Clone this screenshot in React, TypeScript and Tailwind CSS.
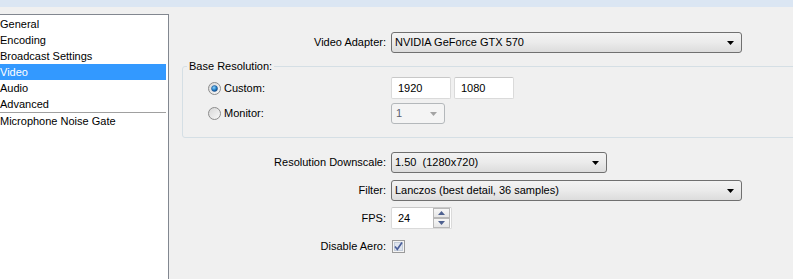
import React from 'react';

const LIST_ITEMS = ['General', 'Encoding', 'Broadcast Settings', 'Video', 'Audio', 'Advanced'];

const Arrow = ({ color = '#000' }: { color?: string }) => (
  <svg width="7" height="4" viewBox="0 0 7 4">
    <polygon points="0,0 7,0 3.5,4" fill={color} />
  </svg>
);

const ComboBox = ({ text, className = '' }: { text: string; className?: string }) => (
  <div
    className={`flex items-center h-[21px] pl-[3px] pr-[7px] border border-[#707070] rounded-[3px] bg-gradient-to-b from-[#f3f3f3] via-[#ebebeb] to-[#dcdcdc] ${className}`}
  >
    <span className="flex-1 whitespace-pre">{text}</span>
    <Arrow />
  </div>
);

const TextBox = ({ value, className = '' }: { value: string; className?: string }) => (
  <div
    className={`flex items-center h-[22px] pl-[6px] bg-white border border-[#dadada] border-t-[#c8c8c8] rounded-[2px] ${className}`}
  >
    {value}
  </div>
);

const Radio = ({ checked }: { checked?: boolean }) => (
  <svg width="13" height="13" viewBox="0 0 13 13">
    <defs>
      <linearGradient id="rbg" x1="0" y1="0" x2="1" y2="1">
        <stop offset="0" stopColor="#d6d6d6" />
        <stop offset="1" stopColor="#fafafa" />
      </linearGradient>
      <radialGradient id="rdot" cx="0.4" cy="0.35" r="0.7">
        <stop offset="0" stopColor="#8fd3fb" />
        <stop offset="0.6" stopColor="#1f7cc4" />
        <stop offset="1" stopColor="#0b3f7c" />
      </radialGradient>
    </defs>
    <circle cx="6.5" cy="6.5" r="6" fill="url(#rbg)" stroke="#8c8c8c" strokeWidth="1" />
    {checked && <circle cx="6.5" cy="6.5" r="3" fill="url(#rdot)" stroke="#1b4f8c" strokeWidth="0.5" />}
  </svg>
);

const CheckBox = () => (
  <svg width="13" height="13" viewBox="0 0 13 13">
    <rect x="0.5" y="0.5" width="12" height="12" fill="#f4f4f4" stroke="#9a9a9a" />
    <rect x="2.5" y="2.5" width="8" height="8" fill="#dfe5ef" stroke="#c3ccd9" />
    <path d="M3 6.5 L5.3 9.3 L10 2.5" fill="none" stroke="#4b5f9a" strokeWidth="1.6" />
  </svg>
);

const SpinButton = ({ up }: { up?: boolean }) => (
  <div className="flex items-center justify-center w-[17px] h-[10px] border border-[#b8b8b8] bg-gradient-to-b from-[#f7f7f7] to-[#e6e6e6]">
    <svg width="7" height="4" viewBox="0 0 7 4">
      <polygon points={up ? '0,4 7,4 3.5,0' : '0,0 7,0 3.5,4'} fill="#4e6190" />
    </svg>
  </div>
);

const Row = ({ label, children, className = '' }: { label: string; children: React.ReactNode; className?: string }) => (
  <div className={`flex items-center ${className}`}>
    <span className="w-[217px] text-right">{label}</span>
    <div className="ml-[5px] flex">{children}</div>
  </div>
);

export default function App() {
  return (
    <div className="w-[793px] h-[279px] overflow-hidden flex flex-col bg-[#f0f0f0] text-black text-[11px] font-['Liberation_Sans',Arial,sans-serif]">
      {/* title strip */}
      <div className="h-[7px] bg-[#dbe6f3] shrink-0" />

      <div className="flex flex-1 pt-[7px]">
        {/* Category list */}
        <div className="w-[169px] shrink-0 bg-white border-t border-r border-[#828790] pr-[2px]">
          <div className="h-[1px]" />
          {LIST_ITEMS.map((item) => (
            <div
              key={item}
              className={`h-[16px] leading-[16px] ${item === 'Video' ? 'bg-[#3399ff] text-white' : ''}`}
            >
              {item}
            </div>
          ))}
          <div className="h-[1px] bg-[#a0a0a0]" />
          <div className="h-[16px] leading-[16px]">Microphone Noise Gate</div>
        </div>

        {/* Settings panel */}
        <div className="flex-1 flex flex-col">
          <Row label="Video Adapter:" className="mt-[18px]">
            <ComboBox text="NVIDIA GeForce GTX 570" className="w-[351px]" />
          </Row>

          {/* Base Resolution group */}
          <div className="relative mt-[13px] ml-[13px] -mr-[6px] h-[72px] border border-[#d5dfe5] rounded-[3px]">
            <span className="absolute -top-[8px] left-[4px] px-[2px] bg-[#f0f0f0] leading-[14px]">Base Resolution:</span>
            <div className="mt-[10px] flex items-center">
              <div className="w-[208px] pl-[25px] flex items-center gap-[3px]">
                <Radio checked />
                <span>Custom:</span>
              </div>
              <TextBox value="1920" className="w-[60px]" />
              <TextBox value="1080" className="w-[60px] ml-[3px]" />
            </div>
            <div className="mt-[4px] flex items-center">
              <div className="w-[208px] pl-[25px] flex items-center gap-[3px]">
                <Radio />
                <span>Monitor:</span>
              </div>
              <div className="flex items-center w-[54px] h-[21px] pl-[4px] pr-[7px] border border-[#b4b8bb] rounded-[3px] bg-[#f4f4f4] text-[#5a6070]">
                <span className="flex-1">1</span>
                <Arrow color="#a3a3a3" />
              </div>
            </div>
          </div>

          <Row label="Resolution Downscale:" className="mt-[14px]">
            <ComboBox text="1.50  (1280x720)" className="w-[216px]" />
          </Row>

          <Row label="Filter:" className="mt-[7px]">
            <ComboBox text="Lanczos (best detail, 36 samples)" className="w-[351px]" />
          </Row>

          <Row label="FPS:" className="mt-[6px]">
            <div className="flex items-center w-[61px] h-[22px] pl-[6px] pr-[1px] bg-white border border-[#dadada] border-t-[#c8c8c8] rounded-[2px]">
              <span className="flex-1">24</span>
              <div className="flex flex-col">
                <SpinButton up />
                <SpinButton />
              </div>
            </div>
          </Row>

          <Row label="Disable Aero:" className="mt-[9px]">
            <div className="ml-[1px] flex">
              <CheckBox />
            </div>
          </Row>
        </div>
      </div>
    </div>
  );
}
